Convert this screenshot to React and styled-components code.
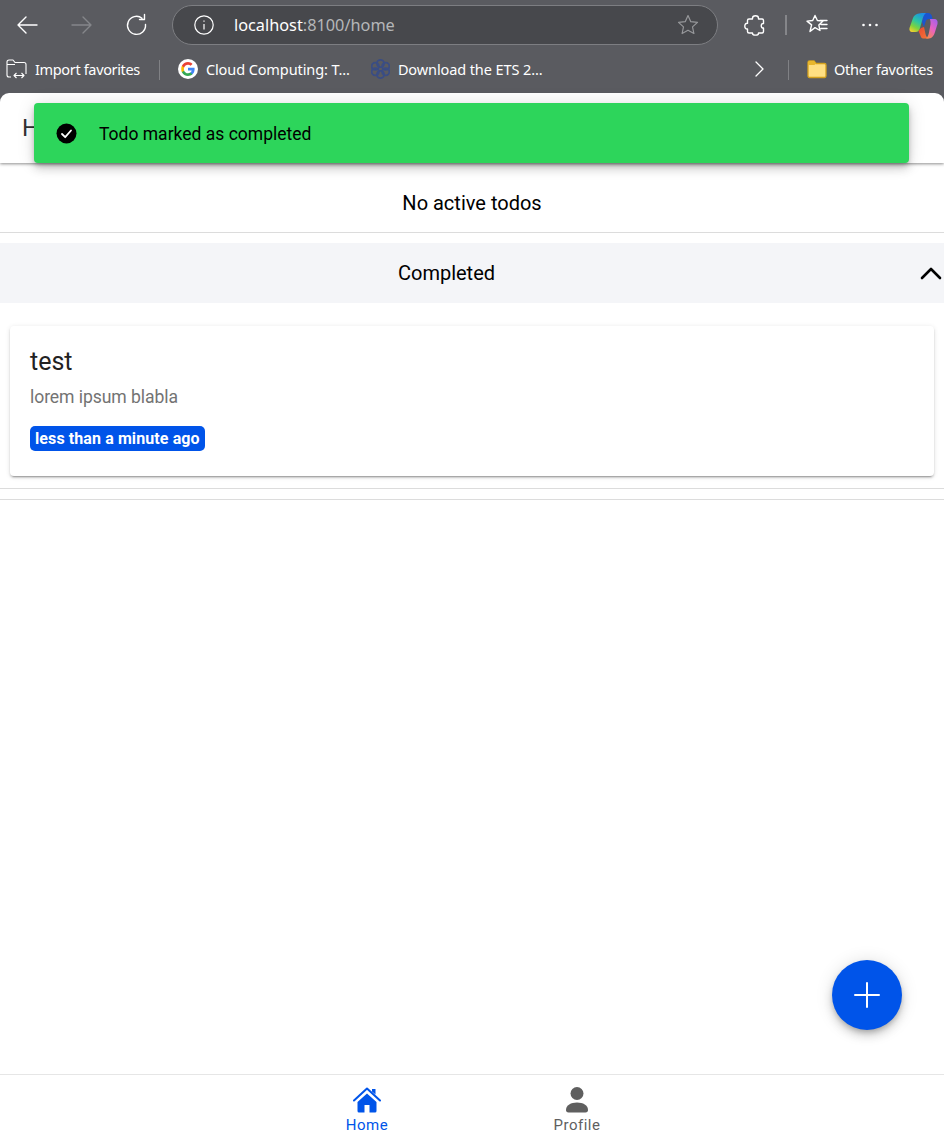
import React from "react";
import styled, { createGlobalStyle } from "styled-components";

const GlobalStyle = createGlobalStyle`
  html, body {
    margin: 0;
    padding: 0;
    height: 100%;
    background: #5a5b60;
    overflow: hidden;
  }
  * {
    box-sizing: border-box;
  }
`;

const Window = styled.div`
  width: 944px;
  height: 1141px;
  display: flex;
  flex-direction: column;
  position: relative;
  background: #5a5b60;
  font-family: "Noto Sans", "Open Sans", sans-serif;
`;

const Toolbar = styled.div`
  height: 50px;
  display: flex;
  align-items: center;
  padding: 0 0 0 15px;
  flex: none;
`;

const NavIcon = styled.svg`
  width: 24px;
  height: 24px;
  flex: none;
  fill: none;
  stroke: ${(p) => p.$color || "#fff"};
  stroke-width: 1.4;
  stroke-linecap: round;
  stroke-linejoin: round;
  margin-left: ${(p) => p.$left || 0}px;
  margin-right: ${(p) => p.$gap || 0}px;
`;

const DotsIcon = styled.svg`
  width: 24px;
  height: 24px;
  flex: none;
  fill: #fff;
  margin-left: 29px;
`;

const CopilotGlyph = styled.svg`
  width: 29px;
  height: 27px;
  flex: none;
  margin-left: 27px;
`;

const AddressBar = styled.div`
  width: 546px;
  height: 40px;
  flex: none;
  border: 1px solid #7d7e82;
  border-radius: 20px;
  background: #47484c;
  display: flex;
  align-items: center;
  padding: 0 18px 0 21px;
`;

const Url = styled.div`
  flex: 1;
  margin-left: 20px;
  font-size: 16.3px;
  color: #b5b6b8;
  & b {
    font-weight: 400;
    color: #fff;
  }
`;

const ToolDivider = styled.div`
  width: 2px;
  height: 20px;
  flex: none;
  margin: 0 9px 0 18px;
  background: #85868a;
`;

const BookmarksBar = styled.div`
  height: 43px;
  flex: none;
  display: flex;
  align-items: flex-start;
  padding: 9px 11px 0 6px;
  color: #fff;
  font-size: 14.5px;
`;

const Bookmark = styled.div`
  display: flex;
  align-items: center;
  gap: ${(p) => p.$iconGap || 8}px;
  height: 20px;
  white-space: nowrap;
  letter-spacing: ${(p) => p.$spacing ?? -0.1}px;
  margin-left: ${(p) => p.$left || 0}px;
  margin-right: ${(p) => p.$gap || 0}px;
`;

const BarDivider = styled.div`
  width: 1px;
  height: 20px;
  margin-top: 1px;
  background: #808185;
  flex: none;
`;

const BarSpacer = styled.div`
  flex: 1;
`;

const MoreChevron = styled.svg`
  width: 24px;
  height: 20px;
  flex: none;
  margin-right: 16px;
  fill: none;
  stroke: #fff;
  stroke-width: 1.3;
  stroke-linecap: round;
  stroke-linejoin: round;
`;

const Page = styled.div`
  flex: 1;
  min-height: 0;
  display: flex;
  flex-direction: column;
  background: #fff;
  border-radius: 9px 9px 0 0;
  font-family: Roboto, sans-serif;
  overflow: hidden;
`;

const Header = styled.header`
  height: 70px;
  flex: none;
  padding: 0 22px;
  display: flex;
  align-items: center;
  font-size: 24px;
  color: #333;
  position: relative;
  box-shadow: 0 1px 3px rgba(0, 0, 0, 0.45);
`;

const Content = styled.main`
  flex: 1;
  min-height: 0;
`;

const EmptyRow = styled.div`
  height: 70px;
  padding-top: 10px;
  display: flex;
  align-items: center;
  justify-content: center;
  font-size: 20px;
  color: #000;
  border-bottom: 1px solid #dcdcdc;
`;

const AccordionHead = styled.div`
  height: 60px;
  margin-top: 10px;
  background: #f4f5f8;
  display: flex;
  align-items: center;
  font-size: 20px;
  color: #000;
`;

const AccordionTitle = styled.div`
  flex: 1;
  text-align: center;
  padding-right: 26px;
`;

const Chevron = styled.svg`
  width: 24px;
  height: 24px;
  margin-right: 1px;
  fill: none;
  stroke: #000;
  stroke-width: 2.6;
  stroke-linecap: round;
  stroke-linejoin: round;
`;

const Card = styled.article`
  margin: 23px 10px 12px;
  height: 150px;
  padding: 20px;
  background: #fff;
  border-radius: 4px;
  box-shadow: 0 3px 1px -2px rgba(0, 0, 0, 0.2), 0 2px 2px 0 rgba(0, 0, 0, 0.14),
    0 1px 5px 0 rgba(0, 0, 0, 0.12);
`;

const CardTitle = styled.h2`
  margin: 0;
  font-size: 25px;
  line-height: 32px;
  font-weight: 400;
  color: #222;
`;

const CardText = styled.p`
  margin: 7px 0 0;
  font-size: 17.6px;
  line-height: 24px;
  letter-spacing: -0.08px;
  color: #737373;
`;

const Badge = styled.span`
  display: inline-block;
  margin-top: 17px;
  height: 25px;
  line-height: 25px;
  padding: 0 5px;
  border-radius: 5px;
  background: #0054e9;
  color: #fff;
  font-size: 16px;
  letter-spacing: 0.1px;
  font-weight: 700;
  white-space: nowrap;
`;

const Rule = styled.div`
  height: ${(p) => p.$h}px;
  border-bottom: 1px solid #dcdcdc;
`;

const TabBar = styled.nav`
  height: 67px;
  flex: none;
  border-top: 1px solid #e6e6e6;
  display: flex;
  justify-content: center;
`;

const Tab = styled.div`
  width: 210px;
  display: flex;
  flex-direction: column;
  align-items: center;
  padding-top: 11px;
  font-size: 15px;
  letter-spacing: 0.5px;
  color: ${(p) => (p.$active ? "#0054e9" : "#5f5f5f")};
`;

const TabIcon = styled.svg`
  width: 28px;
  height: 27px;
  margin-bottom: 3px;
  fill: currentColor;
`;

const Toast = styled.div`
  position: absolute;
  left: 34px;
  top: 103px;
  width: 875px;
  height: 60px;
  display: flex;
  align-items: center;
  gap: 22px;
  padding-left: 22px;
  background: #2dd55b;
  border-radius: 4px;
  font-family: Roboto, sans-serif;
  font-size: 17.5px;
  color: #000;
  box-shadow: 0 3px 5px -1px rgba(0, 0, 0, 0.2), 0 6px 10px 0 rgba(0, 0, 0, 0.14),
    0 1px 18px 0 rgba(0, 0, 0, 0.12);
`;

const ToastText = styled.span`
  margin-top: 2px;
`;

const Fab = styled.button`
  position: absolute;
  left: 832px;
  top: 960px;
  width: 70px;
  height: 70px;
  padding: 0;
  border: 0;
  border-radius: 50%;
  background: #0054e9;
  display: flex;
  align-items: center;
  justify-content: center;
  box-shadow: 0 3px 5px -1px rgba(0, 0, 0, 0.2), 0 6px 10px 0 rgba(0, 0, 0, 0.14),
    0 1px 18px 0 rgba(0, 0, 0, 0.12);
`;

function GoogleIcon() {
  return (
    <svg width="20" height="20" viewBox="0 0 20 20">
      <circle cx="10" cy="10" r="10" fill="#fff" />
      <path d="M16.6 10.2c0-.5 0-1-.1-1.4H10v2.7h3.7c-.2.9-.6 1.6-1.4 2.1v1.7h2.2c1.3-1.2 2.1-3 2.1-5.1z" fill="#4285f4" />
      <path d="M10 17c1.9 0 3.4-.6 4.5-1.7l-2.2-1.7c-.6.4-1.4.7-2.3.7-1.8 0-3.3-1.2-3.9-2.9H3.9v1.8C5 15.4 7.3 17 10 17z" fill="#34a853" />
      <path d="M6.1 11.4c-.3-.9-.3-1.9 0-2.8V6.8H3.9c-.9 1.9-.9 4.5 0 6.4z" fill="#fbbc05" />
      <path d="M10 5.8c1 0 1.9.3 2.6 1l1.9-1.9C13.4 3.7 11.8 3 10 3 7.3 3 5 4.6 3.9 6.8l2.2 1.8C6.7 7 8.2 5.8 10 5.8z" fill="#ea4335" />
    </svg>
  );
}

function EtsIcon() {
  return (
    <svg width="19" height="20" viewBox="0 0 19 20" fill="none" stroke="#3a4d84" strokeWidth="1.8">
      <circle cx="9.5" cy="4.5" r="3.6" />
      <circle cx="9.5" cy="15.5" r="3.6" />
      <circle cx="4.3" cy="7.3" r="3.6" />
      <circle cx="14.7" cy="7.3" r="3.6" />
      <circle cx="4.3" cy="12.7" r="3.6" />
      <circle cx="14.7" cy="12.7" r="3.6" />
    </svg>
  );
}

function CopilotIcon() {
  return (
    <CopilotGlyph viewBox="0 0 29 27">
      <defs>
        <linearGradient id="copL" x1="0.7" y1="0" x2="0.2" y2="1">
          <stop offset="0" stopColor="#1b8fe8" />
          <stop offset="0.45" stopColor="#2cc7a0" />
          <stop offset="0.75" stopColor="#7fd23c" />
          <stop offset="1" stopColor="#f0d030" />
        </linearGradient>
        <linearGradient id="copR" x1="0.8" y1="0" x2="0.2" y2="1">
          <stop offset="0" stopColor="#a860e8" />
          <stop offset="0.5" stopColor="#ea62c0" />
          <stop offset="1" stopColor="#f58a50" />
        </linearGradient>
        <linearGradient id="copB" x1="0" y1="0" x2="1" y2="1">
          <stop offset="0" stopColor="#e8482f" />
          <stop offset="1" stopColor="#f5793a" />
        </linearGradient>
      </defs>
      <path d="M15 1h4c2 0 3.5 1.5 4 3.5L23.5 7H20c-2 0-3 1-3.500 3l-1.500 5-2-5z" fill="#1a55d0" />
      <path d="M10 1.500C12 1 14 1 17 1c-2 1.500-3 4-4 8l-2 7c-.6 2.500-2 4-4.500 4H3C1 20 0 18 .5 16L4 6c.9-2.500 3-4 6-4.500z" fill="url(#copL)" />
      <path d="M9.500 19l2.500 6c.5 1 1.500 1.500 3 1.500h5c-2-.5-3-2.500-3.500-4.500L15 15l-3 1z" fill="url(#copB)" />
      <path d="M20.500 7H25c3 0 4 2 3.500 5L26 20c-1 3.500-3 6.500-6 6.500h-3c1.500-1 2.500-3.500 3-6l1.500-8c.3-2-.2-4-.5-5.500z" fill="url(#copR)" />
    </CopilotGlyph>
  );
}

export default function App() {
  return (
    <Window>
      <GlobalStyle />
      <Toolbar>
        <NavIcon viewBox="0 0 24 24" $gap={31}>
          <path d="M22 12H3M11 4l-8 8 8 8" />
        </NavIcon>
        <NavIcon viewBox="0 0 24 24" $gap={31} $color="#85868a">
          <path d="M2 12h19M13 4l8 8-8 8" />
        </NavIcon>
        <NavIcon viewBox="0 0 24 24" $gap={23}>
          <path d="M20.5 11.5A9 9 0 1 1 17 5.2M19.5 1.5v5h-5" />
        </NavIcon>
        <AddressBar>
          <svg width="20" height="20" viewBox="0 0 20 20" fill="none" stroke="#fff" strokeWidth="1.2">
            <circle cx="10" cy="10" r="9.2" />
            <path d="M10 9v5.5M10 5.5v1.2" />
          </svg>
          <Url>
            <b>localhost</b>:8100/home
          </Url>
          <svg width="22" height="22" viewBox="0 0 22 22" fill="none" stroke="#97989b" strokeWidth="1.2" strokeLinejoin="round">
            <path d="M11 1.5l2.8 6.2 6.7.7-5 4.5 1.4 6.6L11 16.2l-5.900 3.300 1.400-6.600-5-4.500 6.700-.7z" />
          </svg>
        </AddressBar>
        <NavIcon viewBox="0 0 24 24" $left={25}>
          <path d="M9.500 5.200C9.500 2 15.500 2 15.500 5.200V6H19a1.500 1.500 0 0 1 1.500 1.500v3c-3-.5-3 5 0 4.500v3.500A1.500 1.500 0 0 1 19 20h-3.500v.2c0 2.600-6 2.600-6 0V20H6a1.500 1.500 0 0 1-1.500-1.500V16c-3.600.6-3.600-6.300 0-5.700V7.500A1.500 1.500 0 0 1 6 6h3.500z" />
        </NavIcon>
        <ToolDivider />
        <NavIcon viewBox="0 0 24 24" $left={9}>
          <path d="M10 2.500l2.400 5 5.600.6-4.200 3.800 1.200 5.600-5-2.900-5 3.900 1.600-6.600L2 8.100l5.700-.6zM15 7.500h7M16 11.500h6M16 15.500h6" />
        </NavIcon>
        <DotsIcon viewBox="0 0 24 24">
          <circle cx="5.5" cy="12" r="1.3" />
          <circle cx="12" cy="12" r="1.3" />
          <circle cx="18.5" cy="12" r="1.3" />
        </DotsIcon>
        <CopilotIcon />
      </Toolbar>
      <BookmarksBar>
        <Bookmark $gap={19} $spacing={-0.35}>
          <svg width="21" height="20" viewBox="0 0 21 20" fill="none" stroke="#fff" strokeWidth="1.1" strokeLinejoin="round">
            <path d="M5 18H3a2 2 0 0 1-2-2V3a2 2 0 0 1 2-2h4l2 2.5h9a2 2 0 0 1 2 2V15M1.5 5.5H9M8 16.5h10M10.5 14L8 16.5l2.500 2.500M15.500 14l2.500 2.500-2.500 2.500" />
          </svg>
          Import favorites
        </Bookmark>
        <BarDivider />
        <Bookmark $left={18} $gap={21}>
          <GoogleIcon />
          Cloud Computing: T...
        </Bookmark>
        <Bookmark>
          <EtsIcon />
          Download the ETS 2...
        </Bookmark>
        <BarSpacer />
        <MoreChevron viewBox="0 0 24 20">
          <path d="M8 3l7 7-7 7" />
        </MoreChevron>
        <BarDivider />
        <Bookmark $left={18} $iconGap={7} $spacing={-0.25}>
          <svg width="20" height="20" viewBox="0 0 20 20">
            <path d="M1 3.5A1.5 1.5 0 0 1 2.5 2H7l2 2.5h8.500A1.500 1.500 0 0 1 19 6v11a1.500 1.500 0 0 1-1.500 1.500h-15A1.500 1.500 0 0 1 1 17z" fill="#ffdf82" stroke="#d4a11e" strokeWidth="1.3" />
            <path d="M1 6h6.500L9 4.500 7 2H2.500A1.500 1.500 0 0 0 1 3.500z" fill="#e8b62c" />
          </svg>
          Other favorites
        </Bookmark>
      </BookmarksBar>
      <Page>
        <Header>Home</Header>
        <Content>
          <EmptyRow>No active todos</EmptyRow>
          <AccordionHead>
            <AccordionTitle>Completed</AccordionTitle>
            <Chevron viewBox="0 0 24 24">
              <path d="M3 17l9-9 9 9" />
            </Chevron>
          </AccordionHead>
          <Card>
            <CardTitle>test</CardTitle>
            <CardText>lorem ipsum blabla</CardText>
            <Badge>less than a minute ago</Badge>
          </Card>
          <Rule $h={1} />
          <Rule $h={11} />
        </Content>
        <TabBar>
          <Tab $active>
            <TabIcon viewBox="0 0 28 27">
              <path d="M14 7.500L4.500 16v9a1.500 1.500 0 0 0 1.500 1.500h5.500V19h5v7.500H22a1.500 1.500 0 0 0 1.500-1.500v-9z" />
              <path d="M19 3h3.500v5.500L19 5.500z" />
              <path d="M1 14.500L14 2.500l13 12" fill="none" stroke="currentColor" strokeWidth="2" strokeLinecap="round" strokeLinejoin="round" />
            </TabIcon>
            Home
          </Tab>
          <Tab>
            <TabIcon viewBox="0 0 28 27">
              <circle cx="14" cy="7.500" r="6.500" />
              <path d="M14 16.500c-6 0-11 2.700-11 7.500 0 1.500.8 2.500 2.500 2.500h17c1.700 0 2.500-1 2.500-2.500 0-4.800-5-7.500-11-7.500z" />
            </TabIcon>
            Profile
          </Tab>
        </TabBar>
      </Page>
      <Toast>
        <svg width="21" height="21" viewBox="0 0 21 21">
          <circle cx="10.5" cy="10.5" r="10" fill="#000" />
          <path d="M6 11l3.200 3.200L15 7.500" fill="none" stroke="#fff" strokeWidth="1.8" strokeLinecap="round" strokeLinejoin="round" />
        </svg>
        <ToastText>Todo marked as completed</ToastText>
      </Toast>
      <Fab aria-label="Add">
        <svg width="26" height="26" viewBox="0 0 26 26" fill="none" stroke="#fff" strokeWidth="2" strokeLinecap="round">
          <path d="M13 1v24M1 13h24" />
        </svg>
      </Fab>
    </Window>
  );
}
